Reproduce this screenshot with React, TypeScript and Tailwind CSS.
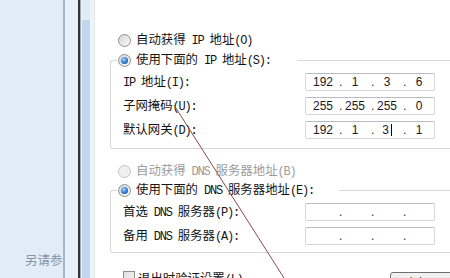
import type { ReactNode } from 'react';

function Lat({ children }: { children: ReactNode }) {
  return <span className="whitespace-pre font-['Liberation_Mono',monospace] text-[12px] tracking-[-1.2px]">{children}</span>;
}

function Radio({ checked = false, disabled = false }: { checked?: boolean; disabled?: boolean }) {
  return (
    <span
      className={`flex h-[13px] w-[13px] shrink-0 items-center justify-center rounded-full border ${
        disabled ? 'border-[#c4c4c4] bg-[#f0f0f0]' : 'border-[#8e8f8f] bg-gradient-to-br from-[#d6d6d6] to-[#fafafa]'
      }`}
    >
      {checked ? <span className="h-[7px] w-[7px] rounded-full bg-[radial-gradient(circle_at_40%_35%,#a8d8ff,#2c74d0_55%,#184c96)]" /> : null}
    </span>
  );
}

function IpBox({ values = ['', '', '', ''], cursor = -1 }: { values?: string[]; cursor?: number }) {
  return (
    <div className="mr-[15px] ml-auto flex h-[18px] w-[130px] items-center rounded-[2px] border border-[#d3d7dc] border-t-[#b9bdc3] bg-white pl-[3px] font-['Liberation_Sans',sans-serif] text-[12px] text-[#1a1a1a]">
      {values.map((v, i) => (
        <div key={i} className="flex">
          <span className="w-[28px] text-center">
            {v}
            {cursor === i ? <span className="ml-[2px] inline-block h-[12px] w-px bg-black align-[-2px]" /> : null}
          </span>
          {i < 3 ? <span className="ml-[2px] w-[2px]">.</span> : null}
        </div>
      ))}
    </div>
  );
}

function Row({ label, box }: { label: ReactNode; box: ReactNode }) {
  return (
    <div className="flex h-[24px] items-center pl-[12px]">
      <span className="whitespace-nowrap">{label}</span>
      {box}
    </div>
  );
}

export default function App() {
  return (
    <div className="relative flex h-[278px] w-[450px] overflow-hidden bg-white font-['Noto_Sans_CJK_SC',sans-serif] text-[12.4px] leading-[18px] text-[#141414]">
      <div className="flex w-[63px] shrink-0 flex-col justify-end overflow-hidden bg-[#e2ecf8]">
        <span className="whitespace-nowrap pb-[9px] pl-[25px] text-[12.5px] text-[#8594a6]">另请参</span>
      </div>
      <div className="w-[2px] shrink-0 bg-[#a5b5c6]" />
      <div className="w-[13px] shrink-0 bg-[#e8f0fa]" />
      <div className="w-[2px] shrink-0 bg-[#353535]" />
      <div className="w-[1px] shrink-0 bg-[#a3a9b0]" />
      <div className="w-[1px] shrink-0 bg-[#eef3f8]" />
      <div className="flex w-[8px] shrink-0 flex-col bg-[#c2d7ee]">
        <div className="h-[20px] bg-[#e1ebf6]" />
      </div>
      <div className="w-[4px] shrink-0 bg-[#eef3f8]" />
      <div className="w-px shrink-0 bg-[#e3e7ec]" />

      <div className="flex min-w-0 flex-1 flex-col pt-[30px]">
        <div className="flex h-[20px] items-center gap-[5px] pl-[23px]">
          <Radio />
          <span className="whitespace-nowrap">
            自动获得<Lat> IP </Lat>地址<Lat>(O)</Lat>
          </span>
        </div>

        <div className="mt-[10px] ml-[15px] flex flex-col rounded-l-[3px] border-y border-l border-[#d5d9de] pb-[6px]">
          <div className="-mt-[11px] ml-[6px] flex h-[20px] w-[180px] items-center gap-[5px] bg-white pl-[1px]">
            <Radio checked />
            <span className="whitespace-nowrap">
              使用下面的<Lat> IP </Lat>地址<Lat>(S):</Lat>
            </span>
          </div>
          <Row label={<><Lat>IP </Lat>地址<Lat>(I):</Lat></>} box={<IpBox values={['192', '1', '3', '6']} />} />
          <Row label={<>子网掩码<Lat>(U):</Lat></>} box={<IpBox values={['255', '255', '255', '0']} />} />
          <Row label={<>默认网关<Lat>(D):</Lat></>} box={<IpBox values={['192', '1', '3', '1']} cursor={2} />} />
        </div>

        <div className="mt-[12px] flex h-[20px] items-center gap-[5px] pl-[23px] text-[#9c9c9c]">
          <Radio disabled />
          <span className="whitespace-nowrap">
            自动获得<Lat> DNS </Lat>服务器地址<Lat>(B)</Lat>
          </span>
        </div>

        <div className="mt-[9px] ml-[15px] flex flex-col rounded-l-[3px] border-y border-l border-[#d5d9de] pb-[4px]">
          <div className="-mt-[11px] ml-[6px] flex h-[20px] w-[222px] items-center gap-[5px] bg-white pl-[1px]">
            <Radio checked />
            <span className="whitespace-nowrap">
              使用下面的<Lat> DNS </Lat>服务器地址<Lat>(E):</Lat>
            </span>
          </div>
          <Row label={<>首选<Lat> DNS </Lat>服务器<Lat>(P):</Lat></>} box={<IpBox />} />
          <Row label={<>备用<Lat> DNS </Lat>服务器<Lat>(A):</Lat></>} box={<IpBox />} />
        </div>

        <div className="mt-[17px] flex items-start pl-[28px]">
          <span className="mt-[1px] h-[12px] w-[12px] shrink-0 border border-[#8e8f8f] bg-gradient-to-br from-[#dedede] to-[#f7f7f7]" />
          <span className="ml-[3px] -mt-[1px] whitespace-nowrap">
            退出时验证设置<Lat>(L)</Lat>
          </span>
          <div className="mt-[2px] -mr-[20px] ml-auto h-[24px] w-[80px] shrink-0 rounded-[3px] border border-[#707070] bg-gradient-to-b from-[#f2f2f2] to-[#dcdcdc] pt-[1px] pl-[14px] whitespace-nowrap">
            高级<Lat>(V)...</Lat>
          </div>
        </div>
      </div>

      <svg className="pointer-events-none absolute inset-0" width="450" height="278">
        <line x1="174" y1="105" x2="284" y2="278" stroke="#8c4a4a" strokeWidth="1" />
      </svg>
    </div>
  );
}
